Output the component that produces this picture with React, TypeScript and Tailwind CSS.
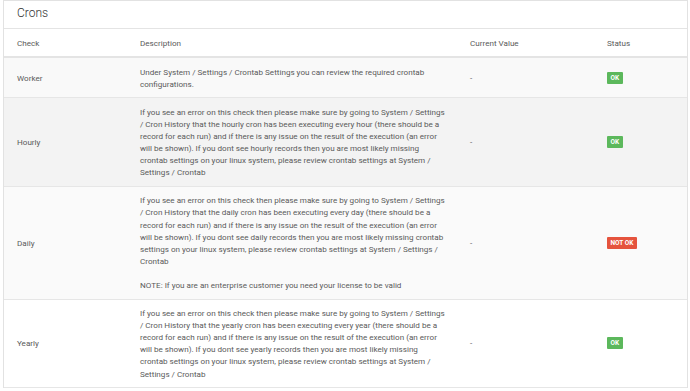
type Row = {
  check: string;
  description: string[][];
  value: string;
  ok: boolean;
  bg: string;
};

// lines are split the way the original table wraps them
const rows: Row[] = [
  {
    check: 'Worker',
    description: [['Under System / Settings / Crontab Settings you can review the required crontab', 'configurations.']],
    value: '-',
    ok: true,
    bg: 'bg-[#f9f9f9]',
  },
  {
    check: 'Hourly',
    description: [
      [
        'If you see an error on this check then please make sure by going to System / Settings',
        '/ Cron History that the hourly cron has been executing every hour (there should be a',
        'record for each run) and if there is any issue on the result of the execution (an error',
        'will be shown). If you dont see hourly records then you are most likely missing',
        'crontab settings on your linux system, please review crontab settings at System /',
        'Settings / Crontab',
      ],
    ],
    value: '-',
    ok: true,
    bg: 'bg-[#f3f3f3]',
  },
  {
    check: 'Daily',
    description: [
      [
        'If you see an error on this check then please make sure by going to System / Settings',
        '/ Cron History that the daily cron has been executing every day (there should be a',
        'record for each run) and if there is any issue on the result of the execution (an error',
        'will be shown). If you dont see daily records then you are most likely missing crontab',
        'settings on your linux system, please review crontab settings at System / Settings /',
        'Crontab',
      ],
      ['NOTE: If you are an enterprise customer you need your license to be valid'],
    ],
    value: '-',
    ok: false,
    bg: 'bg-[#fafafa]',
  },
  {
    check: 'Yearly',
    description: [
      [
        'If you see an error on this check then please make sure by going to System / Settings',
        '/ Cron History that the yearly cron has been executing every year (there should be a',
        'record for each run) and if there is any issue on the result of the execution (an error',
        'will be shown). If you dont see yearly records then you are most likely missing',
        'crontab settings on your linux system, please review crontab settings at System /',
        'Settings / Crontab',
      ],
    ],
    value: '-',
    ok: true,
    bg: 'bg-white',
  },
];

const cols = 'grid grid-cols-[128px_324px_143px_1fr]';

function Badge({ ok }: { ok: boolean }) {
  return ok ? (
    <span className="inline-block rounded-[1px] bg-[#5cb85c] px-[3.5px] text-[6.5px] font-bold leading-[12px] text-white">OK</span>
  ) : (
    <span className="inline-block rounded-[1px] bg-[#e5533d] px-[3.5px] text-[6.5px] font-bold leading-[12px] text-white">NOT OK</span>
  );
}

export default function App() {
  return (
    <div className="h-[391px] overflow-hidden bg-white font-['Roboto',sans-serif] text-[8.1px] leading-[12.1px] text-[#5a5a5a]">
      <div className="ml-[3px] mr-[2px] border-x border-t border-[#e2e2e2]">
        <div className="flex h-[27px] items-center pl-[13px] pb-[3px] text-[12px] font-light text-[#333]">Crons</div>
        <div className={`${cols} border-t border-b-2 border-[#e4e4e4] bg-white py-[7.5px]`}>
          <div className="pl-[13px]">Check</div>
          <div className="pl-[8px]">Description</div>
          <div className="pl-[14px]">Current Value</div>
          <div className="pl-[8px]">Status</div>
        </div>
        {rows.map((r) => (
          <div key={r.check} className={`${cols} ${r.bg} border-b border-[#e6e6e6] py-[7.5px]`}>
            <div className="flex items-center pl-[13px]">{r.check}</div>
            <div className="flex flex-col gap-[12.1px] px-[8px]">
              {r.description.map((para, i) => (
                <p key={i}>
                  {para.map((line, j) => (
                    <span key={j} className="block whitespace-nowrap">
                      {line}
                    </span>
                  ))}
                </p>
              ))}
            </div>
            <div className="flex items-center pl-[14px]">{r.value}</div>
            <div className="flex items-center pl-[8px]">
              <Badge ok={r.ok} />
            </div>
          </div>
        ))}
      </div>
    </div>
  );
}
